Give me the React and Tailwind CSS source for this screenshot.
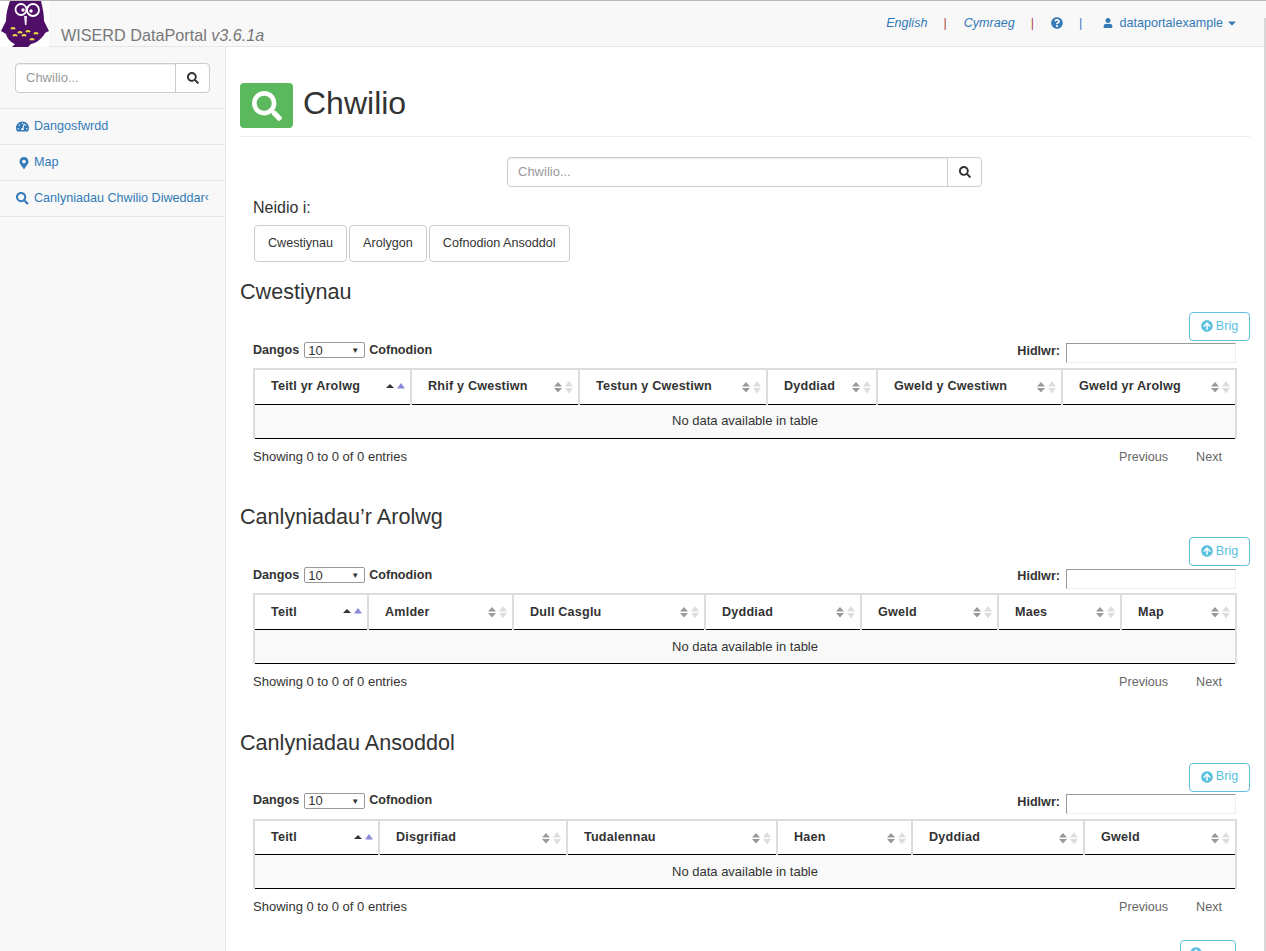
import React from "react";
import { FaSearch, FaTachometerAlt, FaMapMarkerAlt, FaQuestionCircle, FaUser, FaCaretDown, FaArrowCircleUp } from "react-icons/fa";

function Owl() {
  return (
    <svg width="49" height="46" viewBox="0 0 49 46" className="block">
      <rect width="49" height="46" fill="#fff" />
      <path d="M10 0 L41 0 C43 8 44 14 44 20 L49 30 L45 32 C42 38 36 42 31 43 L28 46 L12 46 L15 43 C10 41 7 37 6 33 L1 30 L6 20 C6 12 8 6 10 0 Z" fill="#4f0f66" />
      <circle cx="21" cy="8.500" r="5.500" fill="none" stroke="#fff" strokeWidth="1.8" />
      <circle cx="33" cy="9" r="6" fill="none" stroke="#fff" strokeWidth="1.8" />
      <circle cx="23" cy="9" r="1.700" fill="#fff" />
      <circle cx="31" cy="10" r="1.700" fill="#fff" />
      <path d="M24 15 L27 15 L26.500 24 L25 24 Z" fill="#f4e8f0" />
      <g fill="none" stroke="#e6da48" strokeWidth="2">
        <path d="M11 28 q2-2 4 0" /><path d="M18 32 q2-2 4 0" /><path d="M26 31 q2-2 4 0" /><path d="M34 33 q2-2 4 0" />
        <path d="M13 35 q2-2 4 0" /><path d="M22 35 q2-2 4 0" /><path d="M30 39 q2-2 4 0" />
      </g>
    </svg>
  );
}

function SortIcon({ active }) {
  return (
    <svg width="21" height="14" viewBox="0 0 21 14" className="block shrink-0">
      {active ? (
        <>
          <path d="M1 8 L5 4 L9 8 Z" fill="#333" />
          <path d="M12 8.500 L16 3 L20 8.500 Z" fill="#8a8ad8" />
        </>
      ) : (
        <>
          <path d="M1 6.500 L5 2 L9 6.500 Z M1 8 L9 8 L5 12.500 Z" fill="#999" />
          <path d="M12 6.500 L16 1 L20 6.500 Z M12 8 L20 8 L16 13.500 Z" fill="#ddd" />
        </>
      )}
    </svg>
  );
}

function SearchBox({ className, inputW }) {
  return (
    <div className={"flex h-[30px] " + className}>
      <div className={"flex items-center rounded-l-[4px] border border-[#ccc] bg-white pl-[10px] text-[13px] text-[#999] shadow-[inset_0_1px_1px_rgba(0,0,0,0.075)] " + inputW}>Chwilio...</div>
      <div className="-ml-px flex w-[35px] items-center justify-center rounded-r-[4px] border border-[#ccc] bg-white text-[12px] text-[#333]">
        <FaSearch />
      </div>
    </div>
  );
}

function NavItem({ icon, label, extra }) {
  return (
    <div className="flex h-9 items-center border-b border-[#e7e7e7] pl-4 text-[12.6px] text-[#337ab7]">
      <span className="flex w-[18px] shrink-0 text-[12.6px]">{icon}</span>
      <span className="whitespace-nowrap">{label}</span>
      {extra}
    </div>
  );
}

function Table({ columns }) {
  return (
    <table className="w-[982px] table-fixed border-collapse text-[12.6px]">
      <thead>
        <tr className="h-[35px] border-b border-black">
          {columns.map((c, i) => (
            <th key={c.label} style={{ width: c.width }} className="border-x-2 border-t-2 border-x-[#ddd] border-t-[#ddd] p-0 text-left font-bold text-[#333]">
              <div className="flex items-center justify-between pl-[16px] pr-[4px]">
                <span className="tracking-[0.2px]">{c.label}</span>
                <SortIcon active={i === 0} />
              </div>
            </th>
          ))}
        </tr>
      </thead>
      <tbody>
        <tr className="h-[34px] border-b border-black bg-[#f9f9f9]">
          <td colSpan={columns.length} className="border-x-2 border-x-[#ddd] text-center text-[13px] text-[#333]">No data available in table</td>
        </tr>
      </tbody>
    </table>
  );
}

function Section({ title, columns, className }) {
  return (
    <section className={className}>
      <h3 className="h-[26px] text-[21.6px] leading-[26px] font-normal text-[#333]">{title}</h3>
      <div className="mt-[7px] flex justify-end">
        <div className="flex h-[29px] w-[61px] items-center justify-center gap-[3px] rounded-[4px] border border-[#5bc0de] bg-white pb-px text-[12.6px] text-[#5bc0de]">
          <FaArrowCircleUp className="text-[12px]" /> Brig
        </div>
      </div>
      <div className="ml-[13px] w-[983px]">
        <div className="mt-px flex h-[26px] items-start justify-between text-[12.6px] font-bold text-[#333]">
          <div className="flex h-[16px] items-center">
            <span>Dangos</span>
            <span className="relative mr-1 ml-[5px] flex h-[16px] w-[61px] items-center rounded-[2px] border border-[#999] bg-white pl-[3px] text-[13px] font-normal leading-none">
              10
              <span className="absolute right-[5px] top-[4px] text-[8px] leading-none">▼</span>
            </span>
            <span>Cofnodion</span>
          </div>
          <div className="flex items-center gap-[6px]">
            <span className="mb-[4px]">Hidlwr:</span>
            <div className="h-5 w-[170px] border border-[#eee] border-t-[#999] border-l-[#999] bg-white" />
          </div>
        </div>
        <Table columns={columns} />
        <div className="mt-[8px] flex items-center justify-between text-[13px] text-[#333]">
          <span>Showing 0 to 0 of 0 entries</span>
          <div className="mt-px flex gap-[28px] pr-[14px] text-[12.6px] text-[#666]">
            <span>Previous</span>
            <span>Next</span>
          </div>
        </div>
      </div>
    </section>
  );
}

const t1 = [["Teitl yr Arolwg", 157], ["Rhif y Cwestiwn", 168], ["Testun y Cwestiwn", 188], ["Dyddiad", 110], ["Gweld y Cwestiwn", 185], ["Gweld yr Arolwg", 174]];
const t2 = [["Teitl", 114], ["Amlder", 145], ["Dull Casglu", 192], ["Dyddiad", 156], ["Gweld", 137], ["Maes", 123], ["Map", 115]];
const t3 = [["Teitl", 125], ["Disgrifiad", 188], ["Tudalennau", 210], ["Haen", 135], ["Dyddiad", 172], ["Gweld", 152]];
const cols = (a) => a.map(([label, width]) => ({ label, width }));

export default function App() {
  return (
    <div className="relative h-[951px] w-full overflow-hidden border-t border-t-[#bbb] bg-white font-['Liberation_Sans',Arial,sans-serif] text-[#333]">
      <header className="flex h-[46px] items-start justify-between border-b border-[#e7e7e7] bg-[#f8f8f8]">
        <div className="flex">
          <Owl />
          <span className="mt-[24px] ml-3 text-[16.2px] leading-[20px] whitespace-nowrap text-[#777]">WISERD DataPortal <em>v3.6.1a</em></span>
        </div>
        <div className="mt-[15px] mr-[28px] flex items-center text-[12.6px] leading-[14px] text-[#337ab7]">
          <em>English</em>
          <span className="mr-[17px] ml-[16px] text-[#a94442]">|</span>
          <em>Cymraeg</em>
          <span className="mr-[17px] ml-[16px] text-[#a94442]">|</span>
          <FaQuestionCircle className="text-[12px]" />
          <span className="mr-[21px] ml-[16px]">|</span>
          <FaUser className="mr-[6px] text-[10px]" />
          <span>dataportalexample</span>
          <FaCaretDown className="ml-[3px] text-[12px]" />
        </div>
      </header>
      <div className="flex h-[904px]">
        <aside className="w-[226px] shrink-0 border-r border-[#e7e7e7] bg-[#f8f8f8]">
          <SearchBox className="mx-[15px] mt-[16px]" inputW="w-[161px]" />
          <div className="mt-[15px] border-t border-[#e7e7e7]">
            <NavItem icon={<FaTachometerAlt className="text-[13px]" />} label="Dangosfwrdd" />
            <NavItem icon={<FaMapMarkerAlt className="ml-[2px] text-[12px]" />} label="Map" />
            <NavItem icon={<FaSearch />} label="Canlyniadau Chwilio Diweddar" extra={<span className="-mt-1 text-[12px]">‹</span>} />
          </div>
        </aside>
        <main className="w-[1024px] pl-[14px]">
          <div className="mt-[36px] flex h-[54px] items-start border-b border-[#eee]">
            <div className="flex h-[45px] w-[53px] items-center justify-center rounded-[4px] bg-[#5cb85c] text-white">
              <FaSearch className="text-[30px]" />
            </div>
            <h1 className="ml-[10px] text-[32px] leading-[41px] font-normal text-[#333]">Chwilio</h1>
          </div>
          <SearchBox className="mt-[20px] ml-[267px]" inputW="w-[441px]" />
          <div className="mt-[11px] ml-[13px] text-[16px] leading-[20px]">Neidio i:</div>
          <div className="mt-[7px] ml-[14px] flex gap-[2px] text-[12.6px]">
            {["Cwestiynau", "Arolygon", "Cofnodion Ansoddol"].map((b) => (
              <div key={b} className="flex h-[37px] items-center rounded-[4px] border border-[#ccc] bg-white px-[13px] pb-px">{b}</div>
            ))}
          </div>
          <Section title="Cwestiynau" columns={cols(t1)} className="mt-[17px]" />
          <Section title="Canlyniadau’r Arolwg" columns={cols(t2)} className="mt-[38px]" />
          <Section title="Canlyniadau Ansoddol" columns={cols(t3)} className="mt-[38px]" />
          <div className="mt-[23px] flex justify-end pr-[14px]">
            <div className="flex h-[29px] w-[56px] items-start justify-center gap-px rounded-[4px] border border-[#5bc0de] bg-white pt-[6px] text-[12.6px] text-[#5bc0de]">
              <FaArrowCircleUp className="text-[12px]" /> Brig
            </div>
          </div>
        </main>
      </div>
      <div className="absolute top-[17px] right-0 bottom-0 w-[2px] bg-[#d8d8d8]" />
    </div>
  );
}
